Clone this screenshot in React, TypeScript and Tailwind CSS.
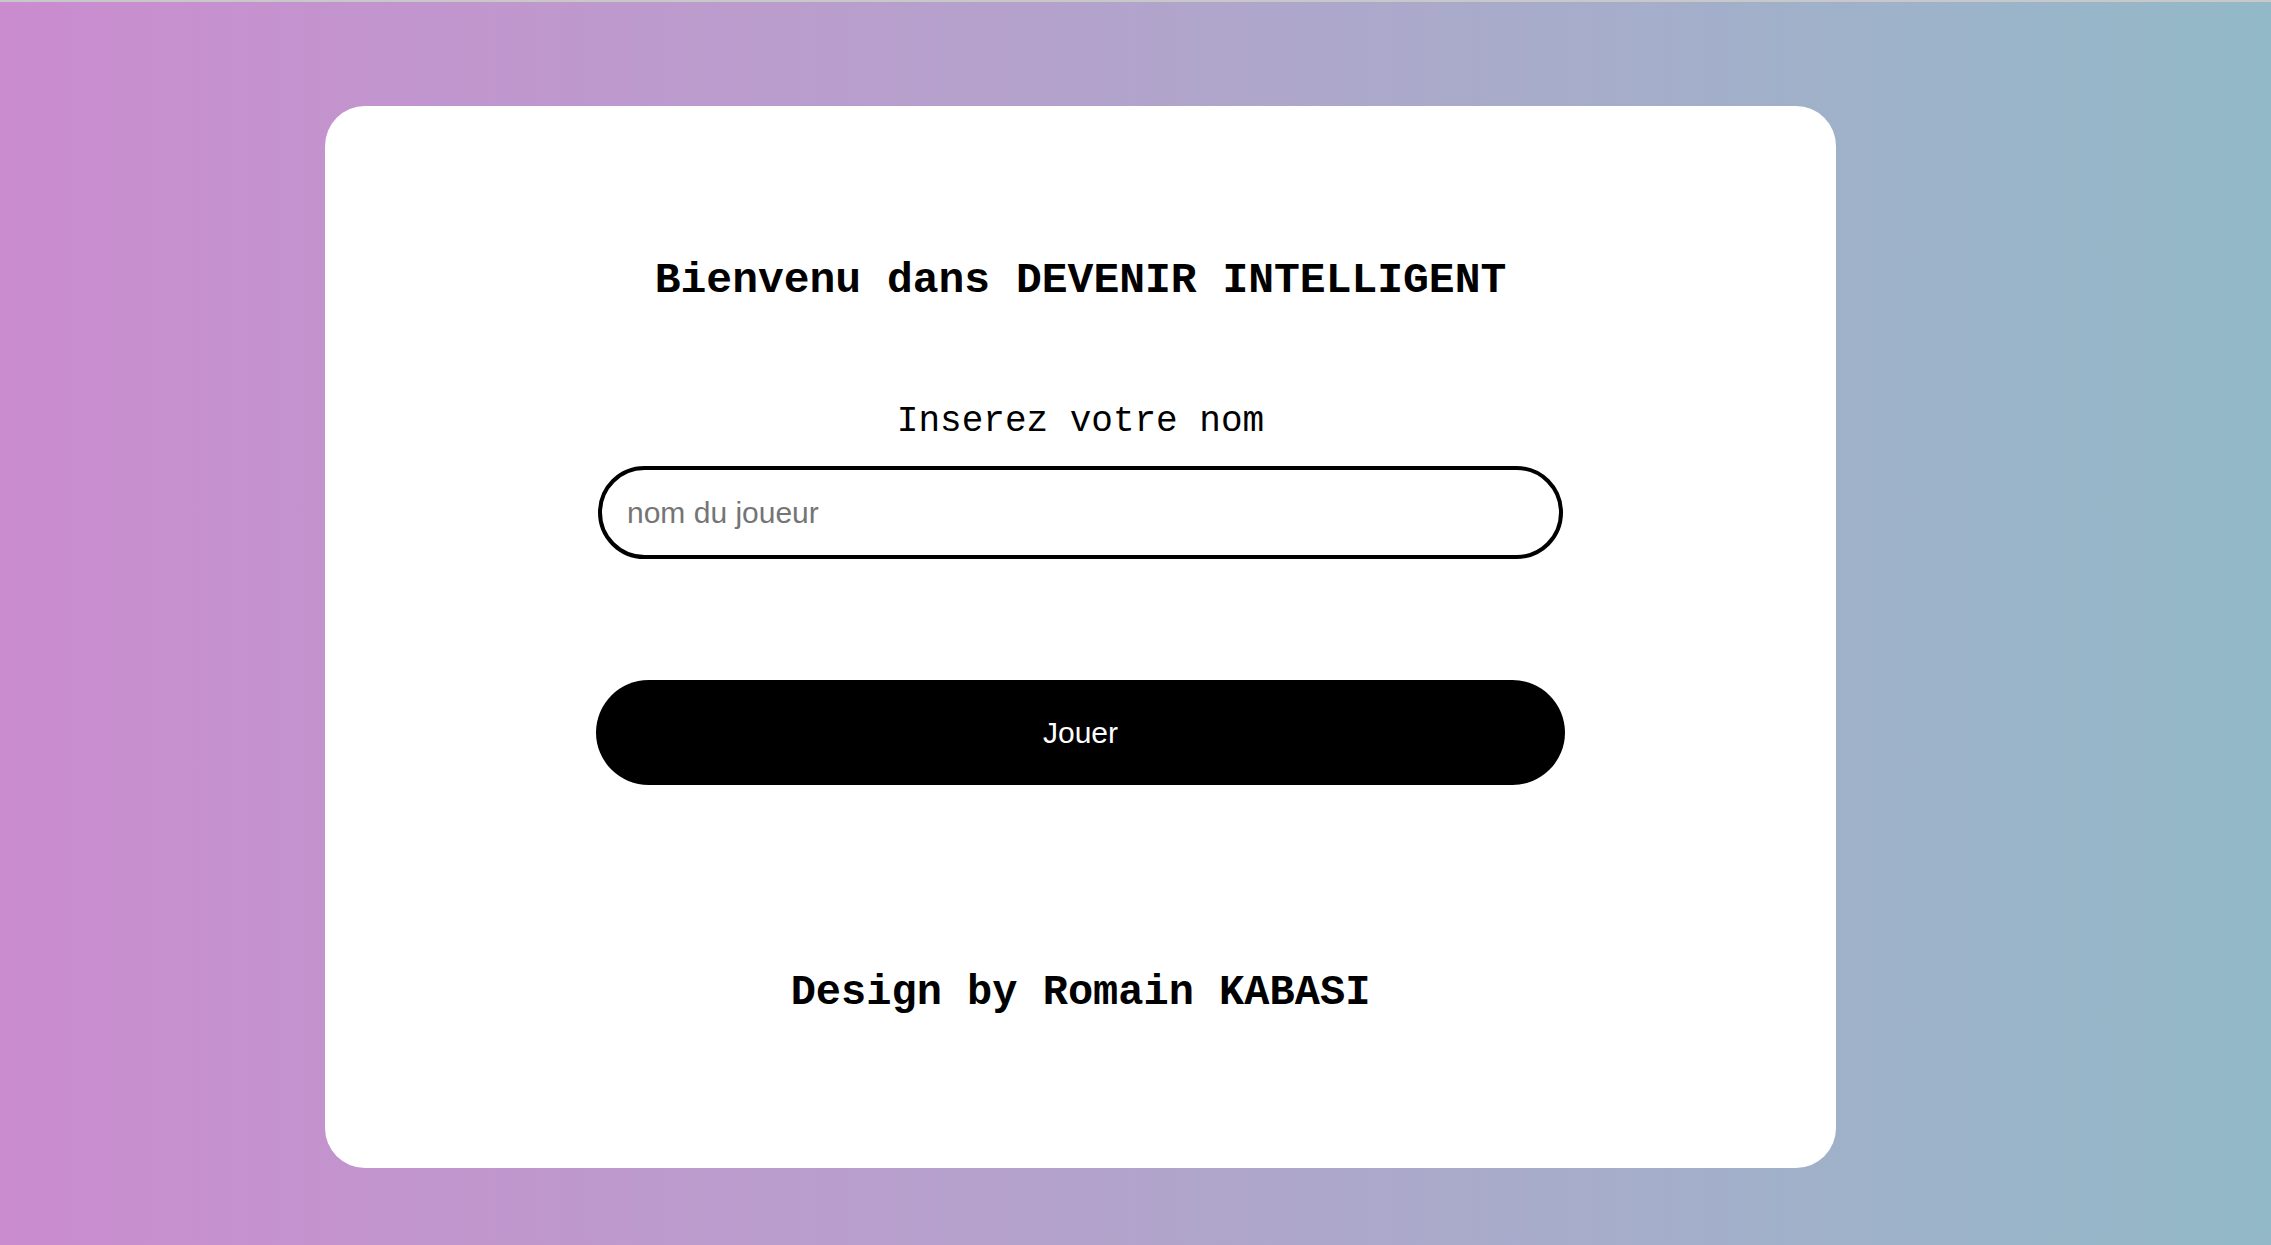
export default function App() {
  return (
    <div className="h-[1245px] w-full overflow-hidden border-t-2 border-[#c8c8c8] bg-gradient-to-r from-[#ca8ccf] to-[#92b9c8]">
      <div className="ml-[325px] mt-[104px] flex h-[1062px] w-[1511px] flex-col items-center rounded-[40px] bg-white pt-[150px]">
        <h1 className="font-['Liberation_Mono',monospace] text-[43px] leading-[50px] font-bold text-black">
          Bienvenu dans DEVENIR INTELLIGENT
        </h1>
        <label
          htmlFor="player"
          className="mt-[95px] font-['Liberation_Mono',monospace] text-[36px] leading-[42px] text-black"
        >
          Inserez votre nom
        </label>
        <input
          id="player"
          type="text"
          placeholder="nom du joueur"
          className="mt-[23px] h-[93px] w-[965px] rounded-full border-[4.5px] border-black bg-white pl-[25px] font-['Liberation_Sans',Arial,sans-serif] text-[30px] text-black outline-none placeholder:text-[#757575]"
        />
        <button className="mt-[121px] h-[105px] w-[969px] rounded-full bg-black font-['Liberation_Sans',Arial,sans-serif] text-[30px] text-white">
          Jouer
        </button>
        <p className="mt-[184px] font-['Liberation_Mono',monospace] text-[42px] leading-[48px] font-bold text-black">
          Design by Romain KABASI
        </p>
      </div>
    </div>
  );
}
